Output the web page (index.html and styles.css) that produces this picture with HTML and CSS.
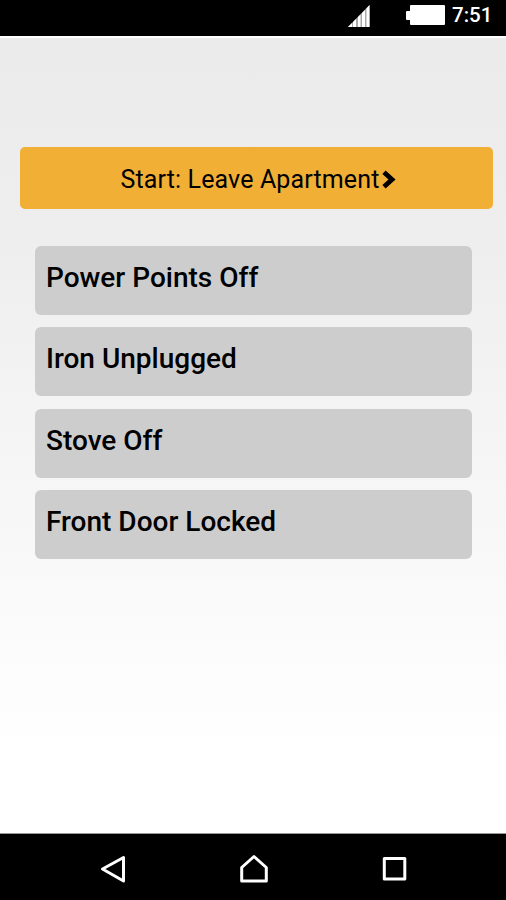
FILE: index.html
```html
<!DOCTYPE html>
<html lang="en">
<head>
  <meta charset="UTF-8">
  <title>Leave Apartment</title>
  <meta name="viewport" content="width=device-width, initial-scale=1.0">
  <link rel="stylesheet" href="styles.css">
</head>
<body>
  <div class="phone">
    <header class="status">
      <svg class="signal" width="22" height="22" viewBox="0 0 22 22">
        <path d="M0 22L21.500 0V22z" fill="#aaa"/>
        <path d="M0 22L4 18V22zM5 22V17L8 14V22zM10 22V12L12.500 9.500V22zM14 22V8L17 5V22zM18.500 22V3.500L21.500 0V22z" fill="#fff"/>
      </svg>
      <svg class="battery" width="39" height="20" viewBox="0 0 39 20">
        <path d="M5 0H38Q39 0 39 1V19Q39 20 38 20H5Q4 20 4 19V15H1Q0 15 0 14V7Q0 6 1 6H4V1Q4 0 5 0z" fill="#fff"/>
      </svg>
      <span class="time">7:51</span>
    </header>
    <main class="content">
      <button class="start">
        <span>Start: Leave Apartment</span>
        <svg class="chevron" width="14" height="20" viewBox="0 0 14 20">
          <path d="M2 2.200L10 9.500L2 16.800" fill="none" stroke="#000" stroke-width="4.800"/>
        </svg>
      </button>
      <ul class="list">
        <li class="item">Power Points Off</li>
        <li class="item">Iron Unplugged</li>
        <li class="item">Stove Off</li>
        <li class="item">Front Door Locked</li>
      </ul>
    </main>
    <nav class="nav">
      <svg width="30" height="30" viewBox="0 0 30 30">
        <path d="M4.500 15L25.500 3.500V27z"/>
      </svg>
      <svg width="30" height="30" viewBox="0 0 30 30">
        <path d="M15 2.500L27.300 13.500V27H2.700V13.500z"/>
      </svg>
      <svg width="30" height="30" viewBox="0 0 30 30">
        <rect x="4.300" y="4.500" width="20.500" height="20.500"/>
      </svg>
    </nav>
  </div>
</body>
</html>
```

FILE: styles.css
```css
body{
  margin: 0;
  font-family: Roboto, "Liberation Sans", sans-serif;
  color: #000;
}
.phone{
  display: flex;
  flex-direction: column;
  height: 900px;
  width: 506px;
  overflow: hidden;
}
.status{
  display: flex;
  align-items: flex-start;
  justify-content: flex-end;
  box-sizing: border-box;
  height: 38px;
  padding: 5px 15px 0 0;
  background: #000;
  border-bottom: 2px solid #fff;
}
.battery{
  margin-left: 36px;
}
.time{
  width: 39px;
  margin-left: 7px;
  color: #fff;
  font-size: 20.5px;
  font-weight: 500;
  line-height: 20px;
}
.content{
  flex: 1;
  padding: 109px 13px 0 20px;
  background: linear-gradient(#ebebeb, #eee 25%, #fff 90%);
}
.start{
  display: flex;
  align-items: center;
  justify-content: center;
  gap: 3px;
  width: 100%;
  height: 62px;
  padding: 3px 0 0 4px;
  border: 0;
  border-radius: 5px;
  background: #f1af35;
  color: #000;
  font-family: inherit;
  font-size: 25px;
  letter-spacing: 0.13px;
}
.list{
  display: flex;
  flex-direction: column;
  gap: 12.6px;
  margin: 36.5px 21px 0 15px;
  padding: 0;
  list-style: none;
}
.item{
  box-sizing: border-box;
  height: 69px;
  padding: 14px 11px;
  border-radius: 6px;
  background: #cdcdcd;
  font-size: 28px;
  font-weight: 500;
  line-height: 35px;
}
.nav{
  display: flex;
  justify-content: center;
  gap: 111px;
  box-sizing: border-box;
  height: 67px;
  padding: 20px 0 0 2px;
  border-top: 1px solid #999;
  background: #000;
}
.nav svg{
  fill: none;
  stroke: #fff;
  stroke-width: 3;
  stroke-linejoin: round;
}
```
